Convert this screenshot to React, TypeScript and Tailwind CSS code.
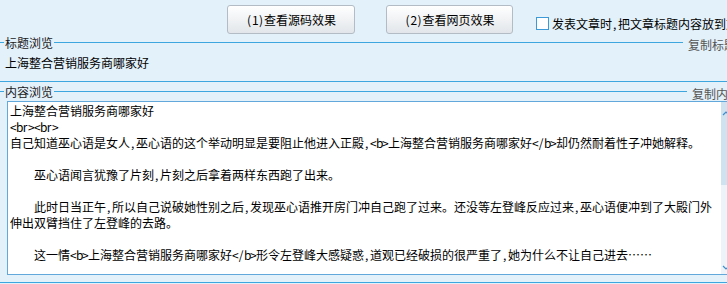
import React from "react";

const FONT = "font-['Noto_Sans_CJK_SC','Liberation_Sans',sans-serif]";

// Renders ASCII characters in 6px half-width cells, like the bitmap CJK font in the reference.
function T({ s }: { s: string }) {
  const parts: React.ReactNode[] = [];
  let buf = "";
  let k = 0;
  for (const ch of s) {
    if (ch.charCodeAt(0) < 128) {
      if (buf) {
        parts.push(<span key={k++}>{buf}</span>);
        buf = "";
      }
      parts.push(
        <span
          key={k++}
          className={ch === "," ? "inline-block w-[6px] pl-px text-left" : "inline-block w-[6px] text-center"}
        >
          {ch === " " ? "\u00a0" : ch}
        </span>
      );
    } else {
      buf += ch;
    }
  }
  if (buf) parts.push(<span key={k++}>{buf}</span>);
  return <>{parts}</>;
}

function Chevron({ dir }: { dir: "up" | "down" }) {
  return (
    <svg width="8" height="6" viewBox="0 0 8 6" className="block">
      {dir === "up" ? (
        <path d="M1 5 L4 2 L7 5" fill="none" stroke="#3a8fd0" strokeWidth="1.2" />
      ) : (
        <path d="M1 1 L4 4 L7 1" fill="none" stroke="#3a8fd0" strokeWidth="1.2" />
      )}
    </svg>
  );
}

function LegendRow({ label, right, rightW }: { label: string; right: string; rightW: string }) {
  return (
    <div className="flex h-[13px] items-center">
      <div className="h-px w-[4px] shrink-0 bg-[#3ea6df]" />
      <div className="shrink-0 px-px text-[12px] leading-[13px] text-[#1a1a1a]">{label}</div>
      <div className="h-px flex-1 bg-[#3ea6df]" />
      <div className={`ml-[5px] ${rightW} shrink-0 overflow-hidden whitespace-nowrap pt-[3px] text-[12px] leading-[13px] text-[#555]`}>
        {right}
      </div>
    </div>
  );
}

const lines: string[] = [
  "上海整合营销服务商哪家好",
  "<br><br>",
  "自己知道巫心语是女人,巫心语的这个举动明显是要阻止他进入正殿,<b>上海整合营销服务商哪家好</b>却仍然耐着性子冲她解释。",
  "",
  "　　巫心语闻言犹豫了片刻,片刻之后拿着两样东西跑了出来。",
  "",
  "　　此时日当正午,所以自己说破她性别之后,发现巫心语推开房门冲自己跑了过来。还没等左登峰反应过来,巫心语便冲到了大殿门外",
  "伸出双臂挡住了左登峰的去路。",
  "",
  "　　这一情<b>上海整合营销服务商哪家好</b>形令左登峰大感疑惑,道观已经破损的很严重了,她为什么不让自己进去……",
];

export default function App() {
  return (
    <div className={`${FONT} relative h-[284px] w-[727px] overflow-hidden bg-[#e3f1fa] text-black`}>
      {/* top toolbar */}
      <div className="flex h-[36px] items-start pt-[5px]">
        <button className="ml-[227px] flex h-[29px] w-[128px] shrink-0 items-center justify-center rounded-[3px] border border-[#b3bcc5] bg-gradient-to-b from-[#ffffff] to-[#e2e6ea] text-[12px] leading-none text-black">
          <T s="(1)查看源码效果" />
        </button>
        <button className="ml-[31px] flex h-[29px] w-[127px] shrink-0 items-center justify-center rounded-[3px] border border-[#b3bcc5] bg-gradient-to-b from-[#ffffff] to-[#e2e6ea] text-[12px] leading-none text-black">
          <T s="(2)查看网页效果" />
        </button>
        <div className="ml-[23px] mt-[12px] flex shrink-0 items-center whitespace-nowrap">
          <div className="h-[13px] w-[13px] shrink-0 border border-[#3d9ad8] bg-white" />
          <span className="ml-[3px] text-[12px] leading-[13px]">
            <T s="发表文章时,把文章标题内容放到文章内容中" />
          </span>
        </div>
      </div>

      {/* title preview */}
      <LegendRow label="标题浏览" right="复制标题" rightW="w-[39px]" />
      <div className="mt-[6px] pl-[5px] text-[12px] leading-[16px]">上海整合营销服务商哪家好</div>
      <div className="mt-[10px] h-px bg-[#3ea6df]" />

      {/* content preview */}
      <div className="mt-[3px]">
        <LegendRow label="内容浏览" right="复制内容" rightW="w-[35px]" />
      </div>
      <div className="ml-[7px] mt-[3px] flex h-[174px] w-[732px] border border-[#62a8db] bg-white">
        <div className="flex-1 overflow-hidden pl-[2px] pt-[1px] text-[12px] leading-[16px]">
          {lines.map((l, i) => (
            <div key={i} className="h-[16px] overflow-hidden whitespace-pre">
              <T s={l} />
            </div>
          ))}
        </div>
        <div className="flex w-[17px] shrink-0 flex-col bg-[#edf4f9]">
          <div className="flex h-[83px] flex-col bg-[#cfe2ef] pl-[1px] pt-[8px]">
            <Chevron dir="up" />
          </div>
          <div className="flex-1" />
          <div className="pb-[3px] pl-[1px]">
            <Chevron dir="down" />
          </div>
        </div>
      </div>
      <div className="mt-[7px] h-px bg-[#3ea6df]" />
    </div>
  );
}
